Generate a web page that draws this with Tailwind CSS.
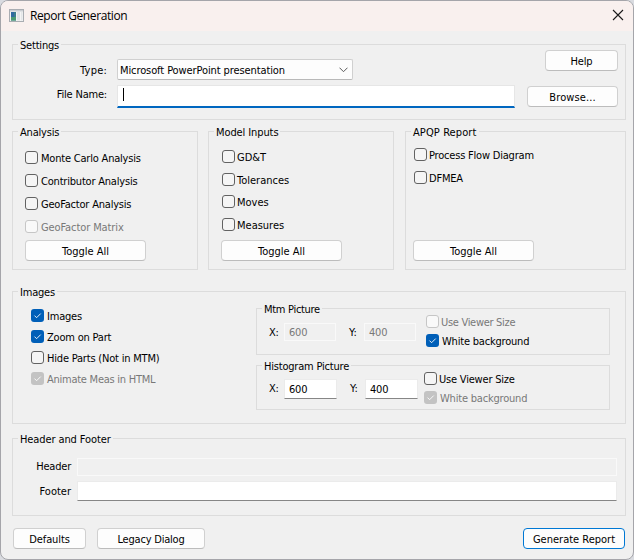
<!DOCTYPE html>
<html lang="en">
<head>
<meta charset="utf-8">
<title>Report Generation</title>
<script src="https://cdn.jsdelivr.net/npm/@tailwindcss/browser@4"></script>
</head>
<body class="bg-[#d9dbe0]">
<svg class="hidden">
  <symbol id="check" viewBox="0 0 13 13"><path d="M3.5 6.6 5.6 8.7 9.7 4.6" fill="none" stroke="#fff" stroke-width="0.9"/></symbol>
</svg>
<main class="w-[634px] h-[560px] rounded-[8px] border border-[#a5a5aa] bg-[#f0f0f0] overflow-hidden flex flex-col font-['DejaVu_Sans_Condensed','DejaVu_Sans',sans-serif] font-stretch-condensed text-[11px] leading-[14px] tracking-[-0.2px] text-black whitespace-nowrap">
  <header class="h-[30px] shrink-0 bg-[#f9f0ee] flex items-center pl-2 pr-[9px]">
    <svg width="15" height="13" viewBox="0 0 15 13" class="mb-[1px]"><rect x=".5" y=".5" width="14" height="12" fill="#f4f4f4" stroke="#a9adb2"/><rect x="1" y="1" width="13" height="1.5" fill="#c9cdd2"/><rect x="2" y="3" width="5" height="8.500" fill="#3b7d8c"/><rect x="2" y="3" width="3" height="5" fill="#2f6aa0"/><rect x="2" y="8" width="5" height="3.500" fill="#4a9a72"/><rect x="8" y="3" width="3" height="8.500" fill="#dfe2e4"/><rect x="12" y="3" width="1.500" height="8.500" fill="#e4e6e8"/></svg>
    <h1 class="ml-[6px] font-['Open_Sans',sans-serif] font-stretch-normal text-[12px] leading-[16px] tracking-[-0.4px]">Report Generation</h1>
    <svg class="ml-auto mb-[2px]" width="12" height="12" viewBox="0 0 12 12"><path d="M1 1 11 11M11 1 1 11" stroke="#1a1a1a" stroke-width="1.100" fill="none"/></svg>
  </header>

  <div class="pl-[11px] pr-[7px] pt-[13px] flex flex-col">
    <section class="h-[76px] border border-[#dcdcdc]">
      <h2 class="-mt-[7px] ml-[5px] px-[2px] pt-px h-[14px] w-fit bg-[#f0f0f0]">Settings</h2>
      <div class="flex justify-between pr-[7px]">
        <div class="flex flex-col gap-[5px] pt-[7px]">
          <div class="flex items-center"><span class="w-[94px] text-right mr-[10px] pt-[2px] tracking-[0.2px]">Type:</span>
            <div class="w-[236px] h-[21px] border border-[#d0d0d0] border-b-[#b9b9b9] rounded-[2px] bg-[#fdfdfd] flex items-center justify-between pl-[2px] pr-[4px]"><span class="pt-[3px] tracking-[-0.1px]">Microsoft PowerPoint presentation</span>
              <svg width="9" height="6" viewBox="0 0 9 6"><path d="M.5 .7 4.500 4.700 8.500 .7" fill="none" stroke="#5a5a5a"/></svg></div></div>
          <div class="flex items-center"><span class="w-[94px] text-right mr-[10px] mb-[3px]">File Name:</span>
            <div class="w-[398px] h-[23px] bg-white border border-[#e6e6e6] border-b-2 border-b-[#0067c0] pl-[5px] pt-[2px]"><div class="w-px h-[13px] bg-black"></div></div></div>
        </div>
        <div class="flex flex-col items-end gap-[15px] -mt-[2px]">
          <button class="pt-[3px] w-[73px] h-[21px] rounded-[4px] border border-[#d0d0d0] border-b-[#bcbcbc] bg-[#fdfdfd]">Help</button>
          <button class="pt-[3px] w-[91px] h-[21px] rounded-[4px] border border-[#d0d0d0] border-b-[#bcbcbc] bg-[#fdfdfd] tracking-[0.1px]">Browse...</button>
        </div>
      </div>
    </section>

    <div class="mt-[11px] grid grid-cols-[186px_186px_221px] justify-start">
      <section class="h-[139px] border border-[#dcdcdc] flex flex-col">
        <h2 class="-mt-[7px] ml-[5px] px-[2px] pt-px h-[14px] w-fit bg-[#f0f0f0]">Analysis</h2>
        <div class="flex flex-col gap-[10px] pl-3 pt-[12px] leading-[16px]">
          <label class="flex items-start gap-[3px] h-[13px]"><i class="size-[13px] rounded-[3px] border border-[#626262] bg-[#f5f5f5]"></i>Monte Carlo Analysis</label>
          <label class="flex items-start gap-[3px] h-[13px]"><i class="size-[13px] rounded-[3px] border border-[#626262] bg-[#f5f5f5]"></i>Contributor Analysis</label>
          <label class="flex items-start gap-[3px] h-[13px]"><i class="size-[13px] rounded-[3px] border border-[#626262] bg-[#f5f5f5]"></i>GeoFactor Analysis</label>
          <label class="flex items-start gap-[3px] h-[13px] text-[#787878] tracking-[-0.1px]"><i class="size-[13px] rounded-[3px] border border-[#c6c6c6] bg-[#f9f9f9]"></i>GeoFactor Matrix</label>
        </div>
        <button class="pt-[3px] mt-auto mb-[8px] ml-3 w-[121px] h-[21px] rounded-[4px] border border-[#d0d0d0] border-b-[#bcbcbc] bg-[#fdfdfd] tracking-normal">Toggle All</button>
      </section>
      <section class="ml-[10px] w-[186px] h-[139px] border border-[#dcdcdc] flex flex-col">
        <h2 class="-mt-[7px] ml-[5px] px-[2px] pt-px h-[14px] w-fit bg-[#f0f0f0] tracking-[-0.1px]">Model Inputs</h2>
        <div class="flex flex-col gap-[10px] pl-[13px] pt-[11px] leading-[16px] tracking-normal">
          <label class="flex items-start gap-[2px] h-[13px]"><i class="size-[13px] rounded-[3px] border border-[#626262] bg-[#f5f5f5]"></i>GD&amp;T</label>
          <label class="flex items-start gap-[2px] h-[13px]"><i class="size-[13px] rounded-[3px] border border-[#626262] bg-[#f5f5f5]"></i>Tolerances</label>
          <label class="-mt-px flex items-start gap-[2px] h-[13px]"><i class="size-[13px] rounded-[3px] border border-[#626262] bg-[#f5f5f5]"></i>Moves</label>
          <label class="flex items-start gap-[2px] h-[13px]"><i class="size-[13px] rounded-[3px] border border-[#626262] bg-[#f5f5f5]"></i>Measures</label>
        </div>
        <button class="pt-[3px] mt-auto mb-[8px] ml-3 w-[121px] h-[21px] rounded-[4px] border border-[#d0d0d0] border-b-[#bcbcbc] bg-[#fdfdfd] tracking-normal">Toggle All</button>
      </section>
      <section class="ml-[21px] w-[221px] h-[139px] border border-[#dcdcdc] flex flex-col">
        <h2 class="-mt-[7px] ml-[5px] px-[2px] pt-px h-[14px] w-fit bg-[#f0f0f0] tracking-[0.1px]">APQP Report</h2>
        <div class="flex flex-col gap-[10px] pl-[8px] pt-[9px] leading-[16px]">
          <label class="flex items-start gap-[2px] h-[13px]"><i class="size-[13px] rounded-[3px] border border-[#626262] bg-[#f5f5f5]"></i>Process Flow Diagram</label>
          <label class="flex items-start gap-[2px] h-[13px]"><i class="size-[13px] rounded-[3px] border border-[#626262] bg-[#f5f5f5]"></i>DFMEA</label>
        </div>
        <button class="pt-[3px] mt-auto mb-[8px] ml-[7px] w-[121px] h-[21px] rounded-[4px] border border-[#d0d0d0] border-b-[#bcbcbc] bg-[#fdfdfd] tracking-normal">Toggle All</button>
      </section>
    </div>

    <section class="mt-[21px] h-[133px] border border-[#dcdcdc]">
      <h2 class="-mt-[7px] ml-[5px] px-[2px] pt-px h-[14px] w-fit bg-[#f0f0f0]">Images</h2>
      <div class="flex justify-between pl-[18px] pr-[15px]">
        <div class="flex flex-col gap-[8px] pt-[10px] leading-[16px]">
          <label class="flex items-start gap-[3px] h-[13px]"><i class="size-[13px] rounded-[3px] bg-[#005fb8]"><svg class="size-[13px]"><use href="#check"/></svg></i>Images</label>
          <label class="flex items-start gap-[3px] h-[13px]"><i class="size-[13px] rounded-[3px] bg-[#005fb8]"><svg class="size-[13px]"><use href="#check"/></svg></i>Zoom on Part</label>
          <label class="flex items-start gap-[3px] h-[13px]"><i class="size-[13px] rounded-[3px] border border-[#626262] bg-[#f5f5f5]"></i>Hide Parts (Not in MTM)</label>
          <label class="flex items-start gap-[3px] h-[13px] text-[#787878] tracking-[-0.25px]"><i class="size-[13px] rounded-[3px] bg-[#c3c3c3]"><svg class="size-[13px]"><use href="#check"/></svg></i>Animate Meas in HTML</label>
        </div>
        <div class="flex flex-col gap-[10px] w-[354px] pt-[9px]">
          <section class="h-[47px] border border-[#dcdcdc]">
            <h3 class="-mt-[7px] ml-[5px] px-[2px] pt-px h-[14px] w-fit bg-[#f0f0f0] tracking-[-0.3px]">Mtm Picture</h3>
            <div class="flex">
              <span class="ml-[12px] w-[15px] mt-[10px]">X:</span><div class="mt-[7px] w-[52px] h-[18px] border border-[#f9f9f9] text-[#787878] pl-[4px] leading-[17px]">600</div>
              <span class="ml-[13px] w-[15px] mt-[10px]">Y:</span><div class="mt-[7px] w-[52px] h-[18px] border border-[#f9f9f9] text-[#787878] pl-[4px] leading-[17px]">400</div>
              <div class="ml-[10px] -mt-[1px] flex flex-col gap-[6px] leading-[16px]">
                <label class="flex items-start gap-[2px] h-[13px] text-[#787878] tracking-[-0.3px]"><i class="size-[13px] rounded-[3px] border border-[#c6c6c6] bg-[#f9f9f9]"></i>Use Viewer Size</label>
                <label class="flex items-start gap-[3px] h-[13px]"><i class="size-[13px] rounded-[3px] bg-[#005fb8]"><svg class="size-[13px]"><use href="#check"/></svg></i>White background</label>
              </div>
            </div>
          </section>
          <section class="h-[45px] border border-[#dcdcdc]">
            <h3 class="-mt-[7px] ml-[5px] px-[2px] pt-px h-[14px] w-fit bg-[#f0f0f0]">Histogram Picture</h3>
            <div class="flex">
              <span class="ml-[12px] w-[15px] mt-[9px]">X:</span><div class="mt-[6px] w-[53px] h-[20px] bg-white border border-[#ebebeb] border-b-[#868686] pl-[4px] leading-[20px]">600</div>
              <span class="ml-[13px] w-[15px] mt-[9px]">Y:</span><div class="mt-[6px] w-[53px] h-[20px] bg-white border border-[#ebebeb] border-b-[#868686] pl-[4px] leading-[20px]">400</div>
              <div class="ml-[6px] -mt-[1px] flex flex-col gap-[6px] leading-[16px]">
                <label class="flex items-start gap-[2px] h-[13px]"><i class="size-[13px] rounded-[3px] border border-[#626262] bg-[#f5f5f5]"></i>Use Viewer Size</label>
                <label class="flex items-start gap-[3px] h-[13px] text-[#787878]"><i class="size-[13px] rounded-[3px] bg-[#c3c3c3]"><svg class="size-[13px]"><use href="#check"/></svg></i>White background</label>
              </div>
            </div>
          </section>
        </div>
      </div>
    </section>

    <section class="mt-[14px] h-[78px] border border-[#dcdcdc]">
      <h2 class="-mt-[7px] ml-[5px] px-[2px] pt-px h-[14px] w-fit bg-[#f0f0f0] tracking-[-0.1px]">Header and Footer</h2>
      <div class="flex flex-col gap-[5px] pt-[12px]">
        <div class="flex items-center"><span class="w-[58px] text-right mr-[6px]">Header</span><div class="w-[540px] h-[18px] border border-[#f9f9f9]"></div></div>
        <div class="flex items-center"><span class="w-[58px] text-right mr-[6px] pt-px tracking-normal">Footer</span><div class="w-[540px] h-[20px] bg-white border border-[#ebebeb] border-b-[#868686]"></div></div>
      </div>
    </section>

    <footer class="mt-[12px] ml-px flex">
      <button class="pt-[3px] w-[73px] h-[21px] rounded-[4px] border border-[#d0d0d0] border-b-[#bcbcbc] bg-[#fdfdfd] tracking-[-0.1px]">Defaults</button>
      <button class="pt-[3px] ml-[11px] w-[108px] h-[21px] rounded-[4px] border border-[#d0d0d0] border-b-[#bcbcbc] bg-[#fdfdfd]">Legacy Dialog</button>
      <button class="pt-[3px] ml-auto mr-px w-[102px] h-[21px] rounded-[4px] border border-[#0078d4] bg-[#fdfdfd] tracking-normal">Generate Report</button>
    </footer>
  </div>
</main>
</body>
</html>
